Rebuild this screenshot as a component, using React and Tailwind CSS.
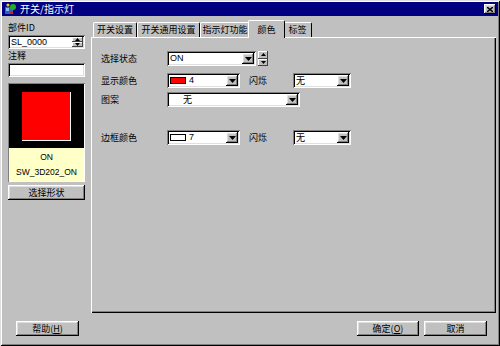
import React from "react";

// Win98 style bevels
const raised =
  "shadow-[inset_-1px_-1px_#000,inset_1px_1px_#fff,inset_-2px_-2px_#808080,inset_2px_2px_#dfdfdf]";
const sunken =
  "shadow-[inset_1px_1px_#808080,inset_-1px_-1px_#fff,inset_2px_2px_#000,inset_-2px_-2px_#dfdfdf]";
const thinRaised = "shadow-[inset_-1px_-1px_#404040,inset_1px_1px_#fff]";

const cjk = { fontFamily: '"Noto Sans CJK SC", "Noto Sans", sans-serif' };
const latin = { fontFamily: '"Liberation Sans", Arial, sans-serif' };

const DownArrow = () => (
  <svg width="7" height="4" viewBox="0 0 7 4">
    <path d="M0 0h7L3.5 4z" fill="#000" />
  </svg>
);

const TinyArrow = ({ up }) => (
  <svg width="5" height="3" viewBox="0 0 5 3" className="block">
    <path d={up ? "M0 3h5L2.5 0z" : "M0 0h5L2.5 3z"} fill="#000" />
  </svg>
);

const Spinner = ({ className }) => (
  <div className={"flex flex-col " + className}>
    <div className={"flex-1 bg-[#c0c0c0] flex items-center justify-center " + thinRaised}>
      <TinyArrow up />
    </div>
    <div className={"flex-1 bg-[#c0c0c0] flex items-center justify-center " + thinRaised}>
      <TinyArrow />
    </div>
  </div>
);

const DropButton = () => (
  <div className={"w-[12px] h-full bg-[#c0c0c0] flex items-center justify-center shrink-0 " + raised}>
    <DownArrow />
  </div>
);

const Select = ({ className, children }) => (
  <div className={"h-[15px] bg-white flex items-center p-[2px] " + sunken + " " + className}>
    <div className="flex-1 flex items-center h-full overflow-hidden">{children}</div>
    <DropButton />
  </div>
);

const Button = ({ className, children }) => (
  <div
    className={"h-[15px] bg-[#c0c0c0] flex items-center justify-center text-[9px] text-black " + raised + " " + className}
    style={cjk}
  >
    {children}
  </div>
);

const Tab = ({ label, width, active }) =>
  active ? (
    <div
      className={"relative z-10 h-[18px] -mx-[2px] bg-[#c0c0c0] border-t border-l border-white border-r border-r-black rounded-t-[2px] flex items-start justify-center pt-[2px] text-[9px] " + width}
      style={cjk}
    >
      {label}
    </div>
  ) : (
    <div
      className={"h-[15px] mt-[2px] bg-[#c0c0c0] border-t border-l border-white border-r border-r-black rounded-t-[2px] flex items-center justify-center text-[9px] " + width}
      style={cjk}
    >
      {label}
    </div>
  );

function TitleBar() {
  return (
    <div className="h-[14px] bg-[#000080] flex items-center pl-[2px] pr-[2px]">
      <svg width="13" height="12" viewBox="0 0 13 12">
        <rect x="1" y="4" width="8" height="7" fill="#3060c0" />
        <rect x="2" y="5" width="3" height="3" fill="#80c0ff" />
        <circle cx="9" cy="4" r="3" fill="#20b020" />
        <circle cx="4" cy="2" r="1.6" fill="#f0d000" />
        <rect x="6" y="8" width="3" height="3" fill="#d02020" />
      </svg>
      <span className="ml-[3px] text-white text-[10px] leading-none" style={cjk}>
        开关/指示灯
      </span>
      <div className={"ml-auto w-[12px] h-[10px] bg-[#c0c0c0] flex items-center justify-center " + raised}>
        <svg width="6" height="5" viewBox="0 0 6 5">
          <path d="M0 0L6 5M6 0L0 5" stroke="#000" strokeWidth="1.4" />
        </svg>
      </div>
    </div>
  );
}

function LeftColumn() {
  return (
    <div className="w-[77px] ml-[6px] mt-[5px] flex flex-col">
      <div className="h-[13px] leading-[13px] text-[9px]" style={cjk}>
        部件ID
      </div>
      <div className={"mt-[1px] h-[14px] bg-white flex items-center p-[2px] pl-[3px] " + sunken}>
        <span className="flex-1 text-[9px] leading-none" style={latin}>
          SL_0000
        </span>
        <Spinner className="w-[11px] h-full" />
      </div>
      <div className="h-[13px] leading-[13px] text-[9px]" style={cjk}>
        注释
      </div>
      <div className={"mt-[1px] h-[14px] bg-white " + sunken} />
      <div className="mt-[6px] h-[99px] flex flex-col p-[1px] bg-black shadow-[inset_1px_1px_#808080,inset_-1px_-1px_#fff]">
        <div className="h-[64px] bg-black pl-[13px] pt-[8px]">
          <div className="w-[49px] h-[49px] bg-[#ff0000] border-r border-b border-white" />
        </div>
        <div className="flex-1 bg-[#ffffc8] flex flex-col items-center justify-center gap-[6px] text-[8.5px] leading-none" style={latin}>
          <span>ON</span>
          <span>SW_3D202_ON</span>
        </div>
      </div>
      <Button className="mt-[3px] h-[14px]">选择形状</Button>
    </div>
  );
}

function Label({ children, className = "" }) {
  return (
    <div className={"text-[9px] leading-none shrink-0 " + className} style={cjk}>
      {children}
    </div>
  );
}

function TabArea() {
  return (
    <div className="w-[405px] ml-[6px] mt-[4px] flex flex-col">
      <div className="h-[17px] flex pl-[2px] items-start">
        <Tab label="开关设置" width="w-[44px]" />
        <Tab label="开关通用设置" width="w-[63px]" />
        <Tab label="指示灯功能" width="w-[50px]" />
        <Tab label="颜色" width="w-[37px]" active />
        <Tab label="标签" width="w-[29px]" />
      </div>
      <div className="h-[276px] bg-[#c0c0c0] pt-[14px] pl-[10px] shadow-[inset_1px_1px_#fff,inset_-1px_-1px_#000,inset_-2px_-2px_#808080]">
        <div className="flex items-center h-[15px]">
          <Label className="w-[66px]">选择状态</Label>
          <Select className="w-[89px]">
            <span className="pl-[1px] text-[9px] leading-none" style={latin}>
              ON
            </span>
          </Select>
          <Spinner className="ml-[2px] w-[10px] h-[15px]" />
        </div>

        <div className="flex items-center h-[15px] mt-[7px]">
          <Label className="w-[66px]">显示颜色</Label>
          <Select className="w-[73px]">
            <div className="ml-[1px] w-[16px] h-[7px] bg-[#ff0000] border border-black" />
            <span className="ml-[3px] text-[9px] leading-none" style={latin}>
              4
            </span>
          </Select>
          <Label className="ml-[9px] w-[44px]">闪烁</Label>
          <Select className="w-[58px]">
            <span className="pl-[1px] text-[9px] leading-none" style={cjk}>
              无
            </span>
          </Select>
        </div>

        <div className="flex items-center h-[15px] mt-[4px]">
          <Label className="w-[66px]">图案</Label>
          <Select className="w-[133px]">
            <span className="pl-[14px] text-[9px] leading-none" style={cjk}>
              无
            </span>
          </Select>
        </div>

        <div className="flex items-center h-[15px] mt-[23px]">
          <Label className="w-[66px]">边框颜色</Label>
          <Select className="w-[73px]">
            <div className="ml-[1px] w-[16px] h-[7px] bg-white border border-black" />
            <span className="ml-[3px] text-[9px] leading-none" style={latin}>
              7
            </span>
          </Select>
          <Label className="ml-[9px] w-[44px]">闪烁</Label>
          <Select className="w-[58px]">
            <span className="pl-[1px] text-[9px] leading-none" style={cjk}>
              无
            </span>
          </Select>
        </div>
      </div>
    </div>
  );
}

export default function App() {
  return (
    <div className="w-[500px] h-[346px] bg-[#c0c0c0] p-[2px] flex flex-col text-black shadow-[inset_1px_1px_#dfdfdf,inset_-1px_-1px_#000,inset_2px_2px_#fff,inset_-2px_-2px_#808080]">
      <TitleBar />
      <div className="flex">
        <LeftColumn />
        <TabArea />
      </div>
      <div className="flex mt-[8px]">
        <Button className="ml-[14px] w-[63px]">
          帮助(<span className="underline">H</span>)
        </Button>
        <Button className="ml-auto w-[62px]">
          确定(<span className="underline">O</span>)
        </Button>
        <Button className="ml-[5px] mr-[11px] w-[63px]">取消</Button>
      </div>
    </div>
  );
}
